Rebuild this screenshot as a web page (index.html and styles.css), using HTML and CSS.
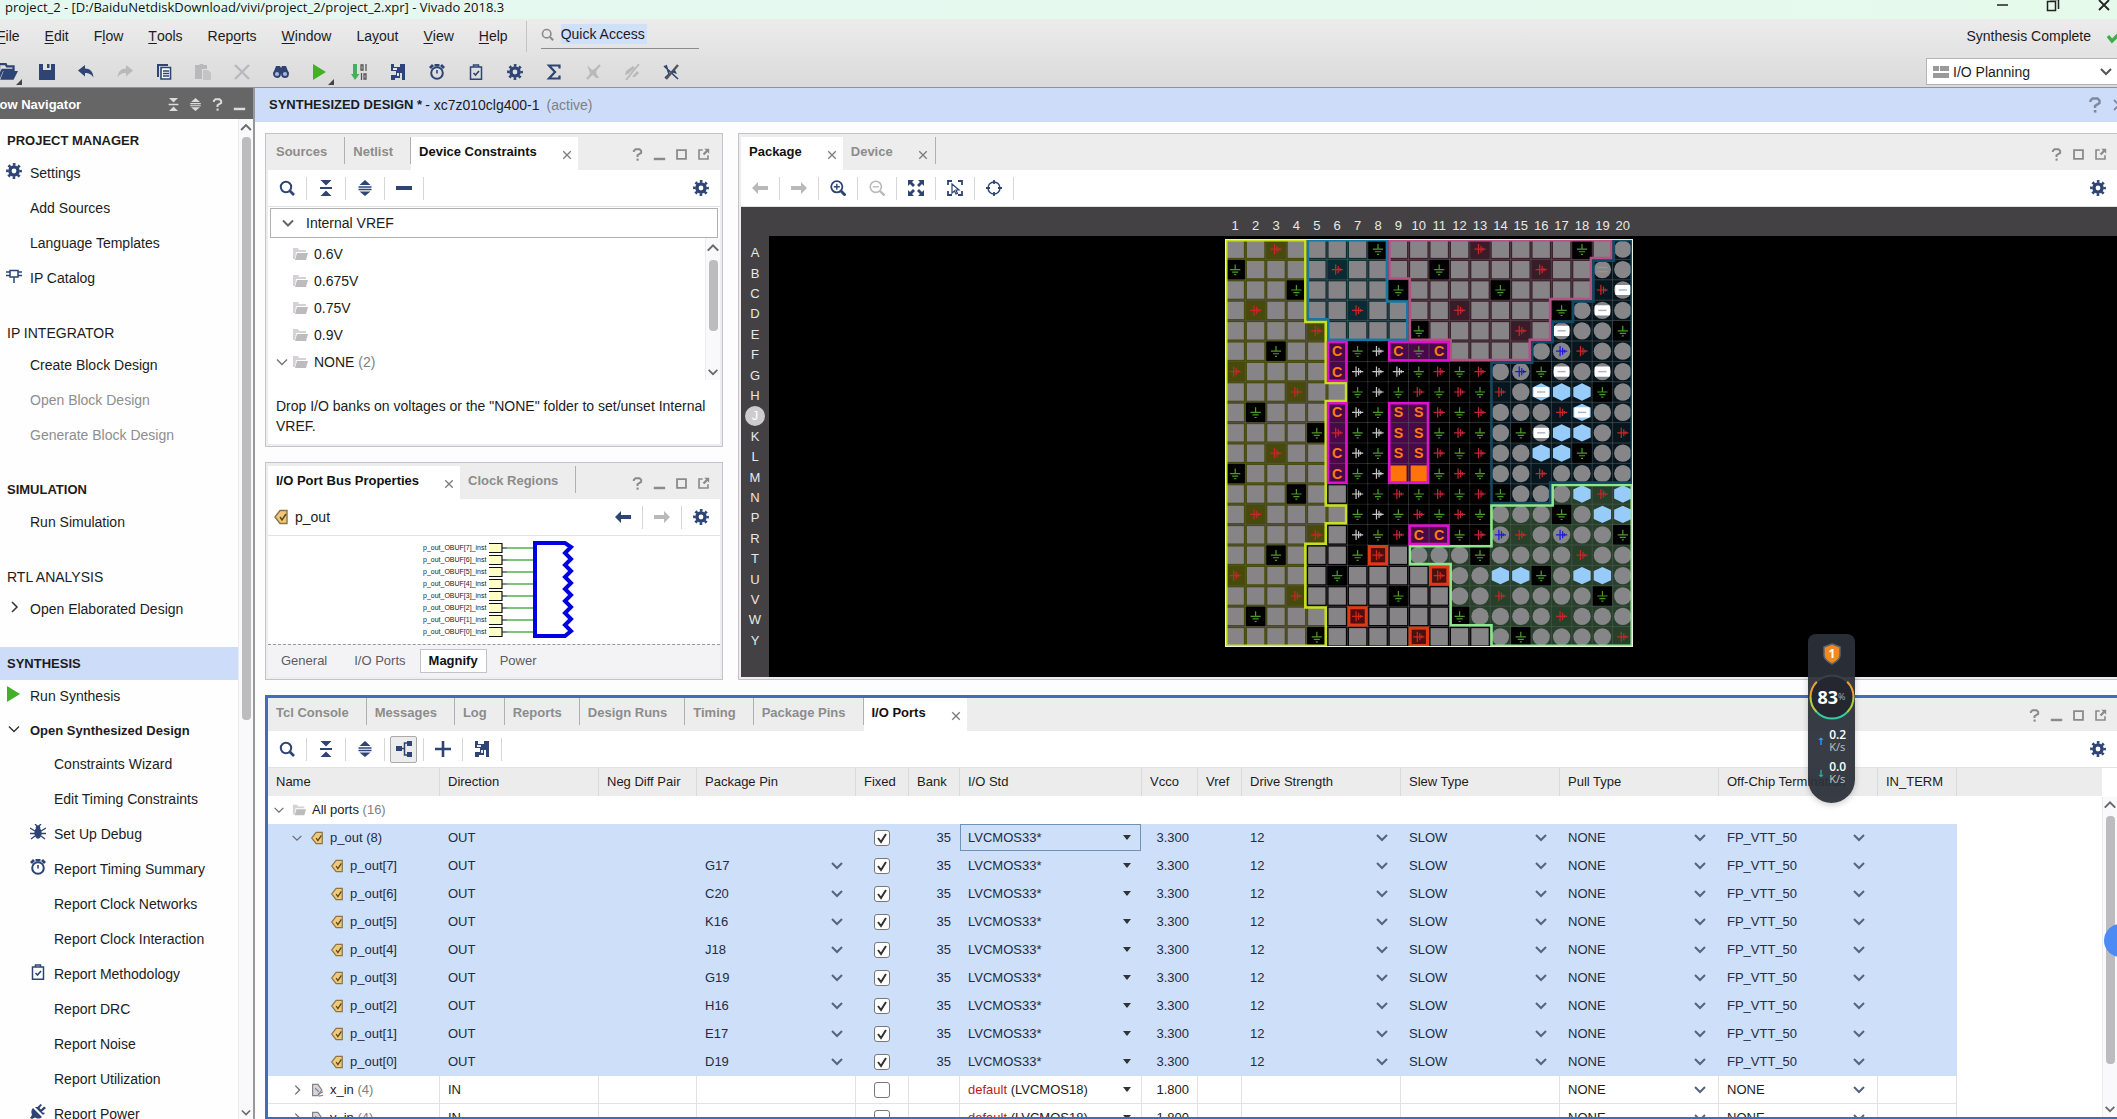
FILE: index.html
```html
<!DOCTYPE html>
<html lang="en">
<head>
<meta charset="utf-8">
<title>project_2 - Vivado 2018.3</title>
<link rel="stylesheet" href="styles.css">
</head>
<body>
<svg class="sprite" aria-hidden="true">
  <symbol id="i-gear" viewBox="0 0 16 16"><circle cx="8" cy="8" r="4.1" fill="none" stroke="currentColor" stroke-width="3.4"/><circle cx="8" cy="8" r="6.6" fill="none" stroke="currentColor" stroke-width="2.6" stroke-dasharray="2.59" stroke-dashoffset="1.3"/></symbol>
  <symbol id="i-search" viewBox="0 0 16 16"><circle cx="7" cy="7" r="5.2" fill="none" stroke="currentColor" stroke-width="2"/><path d="M11 11l4 4" stroke="currentColor" stroke-width="2.6"/></symbol>
  <symbol id="i-collapse" viewBox="0 0 16 16"><path d="M2.500 0h11L8 5.500zM2 7h12v2H2zM2.500 16h11L8 10.500z" fill="currentColor"/></symbol>
  <symbol id="i-expand" viewBox="0 0 16 16"><path d="M8 0l5.500 5h-11zM1.500 6.200h13v1.500h-13zM1.500 8.800h13v1.500h-13zM2.500 11.500h11L8 16z" fill="currentColor"/></symbol>
  <symbol id="i-minus" viewBox="0 0 16 16"><path d="M0 6h16v4H0z" fill="currentColor"/></symbol>
  <symbol id="i-plus" viewBox="0 0 16 16"><path d="M6.700 0h2.600v6.700H16v2.600H9.300V16H6.700V9.300H0V6.700h6.700z" fill="currentColor"/></symbol>
  <symbol id="i-tree" viewBox="0 0 16 16"><path d="M0 5h6v5H0zM11 0h5v5h-5zM11 11h5v5h-5z" fill="currentColor"/><path d="M5 7.500h3M12 2H8.500v12H12" fill="none" stroke="currentColor" stroke-width="1.500"/></symbol>
  <symbol id="i-floor" viewBox="0 0 16 16"><path d="M1 0h3v3h6V0h5v16h-3V9h-2v5H5v2H1v-5h5V7H1z" fill="currentColor"/><path d="M3 4h4v2H3zM7 9h2v3H7z" fill="#e8e8e8"/></symbol>
  <symbol id="i-help" viewBox="0 0 16 16"><path d="M3.500 5V3.500L5.500 1.500h5l2 2V6L8 9v2" fill="none" stroke="currentColor" stroke-width="2.400"/><path d="M6.800 13h2.600v2.600H6.800z" fill="currentColor"/></symbol>
  <symbol id="i-min" viewBox="0 0 16 16"><path d="M1 12h14v3H1z" fill="currentColor"/></symbol>
  <symbol id="i-max" viewBox="0 0 16 16"><path d="M2.500 2.500h11v11h-11z" fill="none" stroke="currentColor" stroke-width="2.200"/></symbol>
  <symbol id="i-float" viewBox="0 0 16 16"><path d="M7 2.500H2.500v11h11V9" fill="none" stroke="currentColor" stroke-width="2"/><path d="M9 1h6v6l-2-2-4 4-2-2 4-4z" fill="currentColor"/></symbol>
  <symbol id="i-x" viewBox="0 0 16 16"><path d="M3 3l10 10M13 3L3 13" stroke="currentColor" stroke-width="1.800"/></symbol>
  <symbol id="i-down" viewBox="0 0 16 16"><path d="M3 5.500l5 5 5-5" fill="none" stroke="currentColor" stroke-width="2"/></symbol>
  <symbol id="i-thin" viewBox="0 0 16 16"><path d="M3 5.500l5 5 5-5" fill="none" stroke="currentColor" stroke-width="1.400"/></symbol>
  <symbol id="i-up" viewBox="0 0 16 16"><path d="M2 11l6-6 6 6" fill="none" stroke="currentColor" stroke-width="2.400"/></symbol>
  <symbol id="i-right" viewBox="0 0 16 16"><path d="M6 3l5 5-5 5" fill="none" stroke="currentColor" stroke-width="1.500"/></symbol>
  <symbol id="i-back" viewBox="0 0 16 16"><path d="M0 8l6-6v4h10v4H6v4z" fill="currentColor"/></symbol>
  <symbol id="i-fwd" viewBox="0 0 16 16"><path d="M16 8l-6-6v4H0v4h10v4z" fill="currentColor"/></symbol>
  <symbol id="i-folder" viewBox="0 0 16 16"><path d="M1 2h5l1 2h7v2H4l-1 7H1z" fill="#d4d2d4"/><path d="M5 7h11l-2 7H3z" fill="#bdbbbd"/></symbol>
  <symbol id="i-play" viewBox="0 0 16 16"><path d="M1 0l13 8-13 8z" fill="#43b02a"/></symbol>
  <symbol id="i-open" viewBox="0 0 18 16"><path d="M1 1h6l1 2h6v3H4L1 13z" fill="none" stroke="currentColor" stroke-width="2"/><path d="M5 7h13l-4 8H2z" fill="currentColor"/></symbol>
  <symbol id="i-save" viewBox="0 0 16 16"><path d="M0 0h4v6h8V0h4v16H0z" fill="currentColor"/><path d="M8 0h2.500v4H8z" fill="currentColor"/></symbol>
  <symbol id="i-undo" viewBox="0 0 16 16"><path d="M0 6.500L7 1v3.500c5 0 8 3 8.500 9C13 10 11 9 7 9v3.500z" fill="currentColor"/></symbol>
  <symbol id="i-redo" viewBox="0 0 16 16"><path d="M16 6.500L9 1v3.500C4 4.500 1 7.500.500 13.500 3 10 5 9 9 9v3.500z" fill="currentColor"/></symbol>
  <symbol id="i-copy" viewBox="0 0 16 16"><path d="M1 0h11v2H3v11H1z" fill="currentColor"/><path d="M5 3.500h9.500v11.500H5z" fill="#fff" stroke="currentColor" stroke-width="1.600"/><path d="M7 7h6M7 9.500h6M7 12h6" stroke="currentColor" stroke-width="1.300"/></symbol>
  <symbol id="i-paste" viewBox="0 0 16 16"><path d="M0 1h4l1-1h3l1 1h3v4H7v10H0z" fill="currentColor"/><path d="M8 6h5l3 3v7H8z" fill="currentColor" opacity=".7"/></symbol>
  <symbol id="i-delete" viewBox="0 0 16 16"><path d="M1 1l14 14M15 1L1 15" stroke="currentColor" stroke-width="2.400"/></symbol>
  <symbol id="i-find" viewBox="0 0 16 16"><path d="M3 2h4l1 2 1-2h4l3 8H0z" fill="currentColor"/><circle cx="4" cy="10" r="3" fill="#aab6d6" stroke="currentColor" stroke-width="1.800"/><circle cx="12" cy="10" r="3" fill="#aab6d6" stroke="currentColor" stroke-width="1.800"/></symbol>
  <symbol id="i-bits" viewBox="0 0 16 16"><path d="M2 0h4v10h2.500L4 16 0 10h2z" fill="#43b05a"/><path d="M10 1v5h2V1zM15 0v7M10.500 9v7M13 10v5h2v-5z" fill="none" stroke="#555" stroke-width="1.300"/></symbol>
  <symbol id="i-clock" viewBox="0 0 16 16"><circle cx="8" cy="9" r="5.800" fill="none" stroke="currentColor" stroke-width="2"/><path d="M5.500 0h5v2.500h-5zM0 3l3-3 2 2-3 3zM16 3l-3-3-2 2 3 3zM7.200 6h1.600v3.600H7.200z" fill="currentColor"/></symbol>
  <symbol id="i-clip" viewBox="0 0 16 16"><path d="M2.500 3h11v12.300h-11zM5.500 3V1h5v2" fill="none" stroke="currentColor" stroke-width="1.500"/><path d="M5.500 9l2 2 3.500-4" fill="none" stroke="currentColor" stroke-width="1.600"/></symbol>
  <symbol id="i-sigma" viewBox="0 0 16 16"><path d="M13.500 4.500V1.500H3L9 8l-6 6.500h10.500v-3" fill="none" stroke="currentColor" stroke-width="2.200"/></symbol>
  <symbol id="i-nomark" viewBox="0 0 16 16"><path d="M2 1l5 5 5-2-1 5 3 5h-3l-3-3-5 3 2-5z" fill="currentColor"/><path d="M15 1L2 15" stroke="currentColor" stroke-width="2.200"/></symbol>
  <symbol id="i-hilite" viewBox="0 0 16 16"><path d="M15 0L2 16" stroke="currentColor" stroke-width="1.800"/><path d="M1 11l1-4 7-5 2 2-7 6zM8 13l5-6 2 2-4 4z" fill="currentColor"/></symbol>
  <symbol id="i-cut" viewBox="0 0 16 16"><path d="M1 2l14 13M3 1l3 9-4 4" fill="none" stroke="currentColor" stroke-width="1.600"/><path d="M15 1L3 15" stroke="#555" stroke-width="2.400"/><path d="M8 8l4-2 2 4z" fill="currentColor"/></symbol>
  <symbol id="i-chip" viewBox="0 0 16 16"><path d="M4 2.500h8V9H4zM0 4h4M0 7.500h4M12 4h4M12 7.500h4M8 9v6" fill="none" stroke="currentColor" stroke-width="1.500"/></symbol>
  <symbol id="i-bug" viewBox="0 0 16 16"><ellipse cx="8" cy="9" rx="3.600" ry="5.800" fill="currentColor"/><circle cx="8" cy="3.500" r="2.300" fill="currentColor"/><path d="M0 4l5 3M16 4l-5 3M0 9.500h5M11 9.500h5M1 15l4-3M15 15l-4-3M5 0l2 2M11 0L9 2" stroke="currentColor" stroke-width="1.300"/></symbol>
  <symbol id="i-plug" viewBox="0 0 16 16"><path d="M3 4l9 9c-2 2-5 2-7 .500L2 15l-2-1 2-3C1 8 1 6 3 4z" fill="currentColor"/><path d="M5 3l8 8 2-2-3.500-1L16 4l-2-1.500-3 3L9.500 4 12 1 10.500 0 7.500 3z" fill="currentColor"/></symbol>
  <symbol id="i-zoomin" viewBox="0 0 16 16"><circle cx="6.800" cy="6.800" r="5.600" fill="none" stroke="currentColor" stroke-width="1.800"/><path d="M3.800 6.800h6M6.800 3.800v6" stroke="currentColor" stroke-width="1.400"/><path d="M11 11l4.500 4.500" stroke="currentColor" stroke-width="3"/></symbol>
  <symbol id="i-zoomout" viewBox="0 0 16 16"><circle cx="6.800" cy="6.800" r="5.600" fill="none" stroke="currentColor" stroke-width="1.600"/><path d="M3.800 6.800h6" stroke="currentColor" stroke-width="1.400"/><path d="M11 11l4.500 4.500" stroke="currentColor" stroke-width="2.400"/></symbol>
  <symbol id="i-fit" viewBox="0 0 16 16"><path d="M0 0h6L4 2l3 3-2 2-3-3-2 2zM16 0v6l-2-2-3 3-2-2 3-3-2-2zM0 16v-6l2 2 3-3 2 2-3 3 2 2zM16 16h-6l2-2-3-3 2-2 3 3 2-2z" fill="currentColor"/></symbol>
  <symbol id="i-fitsel" viewBox="0 0 16 16"><path d="M1 5V1h4M11 1h4v4M15 11v4h-4M5 15H1v-4" fill="none" stroke="currentColor" stroke-width="1.800"/><path d="M5 4l7 6H9l1.500 3.500-1.500.500L7.500 11 5 13z" fill="none" stroke="currentColor" stroke-width="1.200"/></symbol>
  <symbol id="i-target" viewBox="0 0 16 16"><circle cx="8" cy="8" r="6" fill="none" stroke="currentColor" stroke-width="1.400"/><path d="M8 0v4M8 12v4M0 8h4M12 8h4" stroke="currentColor" stroke-width="1.800"/></symbol>
  <symbol id="i-port" viewBox="0 0 16 16"><path d="M7 1.500h7v13H7L2 8z" fill="#f0c878" stroke="#8a7448" stroke-width="1.400"/><path d="M7 8l2 3 4-6" fill="none" stroke="#5a4620" stroke-width="1.500"/></symbol>
  <symbol id="i-portin" viewBox="0 0 16 16"><path d="M3 1.500h6L13.500 8 9 14.500H3z" fill="#d8d6da" stroke="#848288" stroke-width="1.400"/><path d="M6 6l4 4M9 13l6-3M10 15l5-1" stroke="#848288" stroke-width="1.300"/></symbol>
  <symbol id="i-layout" viewBox="0 0 16 14"><path d="M0 1h6v5H0zM7 1h9v5H7zM0 8h16v5H0z" fill="#9a9a9a"/></symbol>
  <symbol id="i-done" viewBox="0 0 16 16"><path d="M1 8l4 5L15 3" fill="none" stroke="#3fae49" stroke-width="3.400"/></symbol>
  <symbol id="i-restore" viewBox="0 0 16 16"><path d="M2.500 4.500h8v9h-8zM5 2.500h8.500V12" fill="none" stroke="currentColor" stroke-width="1.500"/></symbol>
</svg>

<div class="app">
  <header class="titlebar">
    <h1 class="titlebar-text">project_2 - [D:/BaiduNetdiskDownload/vivi/project_2/project_2.xpr] - Vivado 2018.3</h1>
    <div class="window-controls">
      <button aria-label="Minimize"><svg class="icon"><path d="M3 8h11" stroke="currentColor" stroke-width="1.500"/></svg></button>
      <button aria-label="Restore"><svg class="icon"><use href="#i-restore"/></svg></button>
      <button aria-label="Close"><svg class="icon"><use href="#i-x"/></svg></button>
    </div>
  </header>
  <div class="chrome">
    <div class="menubar">
      <nav class="menus" aria-label="Main menu">
        <button><u>F</u>ile</button><button><u>E</u>dit</button><button>F<u>l</u>ow</button><button><u>T</u>ools</button><button>Rep<u>o</u>rts</button><button><u>W</u>indow</button><button>La<u>y</u>out</button><button><u>V</u>iew</button><button><u>H</u>elp</button>
      </nav>
      <div class="quick">
        <label class="quick-label">
          <svg class="icon muted"><use href="#i-search"/></svg>
          <input class="quick-input" type="text" value="Quick Access" aria-label="Quick Access">
        </label>
      </div>
      <div class="status">Synthesis Complete <svg class="icon"><use href="#i-done"/></svg></div>
    </div>
    <div class="toolbar">
      <div class="tools">
        <button class="has-more" aria-label="Open"><svg class="icon big"><use href="#i-open"/></svg></button>
        <button aria-label="Save"><svg class="icon"><use href="#i-save"/></svg></button>
        <button aria-label="Undo"><svg class="icon"><use href="#i-undo"/></svg></button>
        <button class="off" aria-label="Redo"><svg class="icon"><use href="#i-redo"/></svg></button>
        <button aria-label="Copy"><svg class="icon"><use href="#i-copy"/></svg></button>
        <button class="off" aria-label="Paste"><svg class="icon"><use href="#i-paste"/></svg></button>
        <button class="off" aria-label="Delete"><svg class="icon"><use href="#i-delete"/></svg></button>
        <button aria-label="Find"><svg class="icon"><use href="#i-find"/></svg></button>
        <button class="has-more" aria-label="Run"><svg class="icon"><use href="#i-play"/></svg></button>
        <button aria-label="Bitstream"><svg class="icon"><use href="#i-bits"/></svg></button>
        <button aria-label="Floorplan"><svg class="icon"><use href="#i-floor"/></svg></button>
        <button aria-label="Timing"><svg class="icon"><use href="#i-clock"/></svg></button>
        <button aria-label="Methodology"><svg class="icon"><use href="#i-clip"/></svg></button>
        <button aria-label="Settings"><svg class="icon"><use href="#i-gear"/></svg></button>
        <button aria-label="Summary"><svg class="icon"><use href="#i-sigma"/></svg></button>
        <button class="off" aria-label="Unmark"><svg class="icon"><use href="#i-nomark"/></svg></button>
        <button class="off" aria-label="Unhighlight"><svg class="icon"><use href="#i-hilite"/></svg></button>
        <button aria-label="Unselect"><svg class="icon"><use href="#i-cut"/></svg></button>
      </div>
      <label class="layout-pick"><svg class="icon"><use href="#i-layout"/></svg>
        <select aria-label="Layout"><option>I/O Planning</option></select>
      </label>
    </div>
  </div>

  <div class="body">
    <aside class="flow">
      <header class="flow-head">
        <h2>Flow Navigator</h2>
        <div class="flow-actions">
          <button aria-label="Collapse all"><svg class="icon small"><use href="#i-collapse"/></svg></button>
          <button aria-label="Expand all"><svg class="icon small"><use href="#i-expand"/></svg></button>
          <button aria-label="Help"><svg class="icon small"><use href="#i-help"/></svg></button>
          <button aria-label="Minimize"><svg class="icon small"><use href="#i-min"/></svg></button>
        </div>
      </header>
      <div class="flow-body">
        <nav class="flow-list" aria-label="Flow">
          <section><h3 class="strong">PROJECT MANAGER</h3>
            <ul>
              <li><svg class="icon"><use href="#i-gear"/></svg><a href="#">Settings</a></li>
              <li><a href="#">Add Sources</a></li>
              <li><a href="#">Language Templates</a></li>
              <li><svg class="icon"><use href="#i-chip"/></svg><a href="#">IP Catalog</a></li>
            </ul></section>
          <section><h3>IP INTEGRATOR</h3>
            <ul>
              <li><a href="#">Create Block Design</a></li>
              <li><a class="disabled" href="#">Open Block Design</a></li>
              <li><a class="disabled" href="#">Generate Block Design</a></li>
            </ul></section>
          <section><h3 class="strong">SIMULATION</h3>
            <ul><li><a href="#">Run Simulation</a></li></ul></section>
          <section><h3>RTL ANALYSIS</h3>
            <ul><li><svg class="icon dark"><use href="#i-right"/></svg><a href="#">Open Elaborated Design</a></li></ul></section>
          <section><h3 class="strong current">SYNTHESIS</h3>
            <ul>
              <li><svg class="icon"><use href="#i-play"/></svg><a href="#">Run Synthesis</a></li>
              <li><svg class="icon dark"><use href="#i-thin"/></svg><a class="strong" href="#">Open Synthesized Design</a></li>
            </ul>
            <ul class="nested">
              <li><a href="#">Constraints Wizard</a></li>
              <li><a href="#">Edit Timing Constraints</a></li>
              <li><svg class="icon"><use href="#i-bug"/></svg><a href="#">Set Up Debug</a></li>
              <li><svg class="icon"><use href="#i-clock"/></svg><a href="#">Report Timing Summary</a></li>
              <li><a href="#">Report Clock Networks</a></li>
              <li><a href="#">Report Clock Interaction</a></li>
              <li><svg class="icon"><use href="#i-clip"/></svg><a href="#">Report Methodology</a></li>
              <li><a href="#">Report DRC</a></li>
              <li><a href="#">Report Noise</a></li>
              <li><a href="#">Report Utilization</a></li>
              <li><svg class="icon"><use href="#i-plug"/></svg><a href="#">Report Power</a></li>
            </ul></section>
        </nav>
        <div class="scroll flow-scroll"><svg class="icon small"><use href="#i-up"/></svg><div class="track"><div class="thumb"></div></div><svg class="icon small"><use href="#i-down"/></svg></div>
      </div>
    </aside>

    <main class="work">
      <header class="design-head">
        <h2><b>SYNTHESIZED DESIGN *</b> <span>- xc7z010clg400-1</span> <em>(active)</em></h2>
        <div class="design-actions">
          <button aria-label="Help"><svg class="icon"><use href="#i-help"/></svg></button>
          <button aria-label="Close"><svg class="icon"><use href="#i-x"/></svg></button>
        </div>
      </header>

      <div class="panes">
        <div class="side-panes">
          <section class="panel">
            <div class="tabs">
              <button class="tab">Sources</button><button class="tab">Netlist</button><button class="tab active">Device Constraints<svg class="icon close"><use href="#i-x"/></svg></button>
              <div class="panel-actions"><button aria-label="Help"><svg class="icon small"><use href="#i-help"/></svg></button><button aria-label="Minimize"><svg class="icon small"><use href="#i-min"/></svg></button><button aria-label="Maximize"><svg class="icon small"><use href="#i-max"/></svg></button><button aria-label="Float"><svg class="icon small"><use href="#i-float"/></svg></button></div>
            </div>
            <div class="bar">
              <button aria-label="Search"><svg class="icon"><use href="#i-search"/></svg></button><button aria-label="Collapse"><svg class="icon"><use href="#i-collapse"/></svg></button><button aria-label="Expand"><svg class="icon"><use href="#i-expand"/></svg></button><button aria-label="Remove"><svg class="icon"><use href="#i-minus"/></svg></button>
              <button class="bar-end" aria-label="Settings"><svg class="icon"><use href="#i-gear"/></svg></button>
            </div>
            <div class="vref-wrap"><button class="vref"><svg class="icon"><use href="#i-down"/></svg>Internal VREF</button></div>
            <div class="volts">
              <ul>
                <li><svg class="icon"><use href="#i-folder"/></svg>0.6V</li>
                <li><svg class="icon"><use href="#i-folder"/></svg>0.675V</li>
                <li><svg class="icon"><use href="#i-folder"/></svg>0.75V</li>
                <li><svg class="icon"><use href="#i-folder"/></svg>0.9V</li>
                <li class="open"><svg class="icon"><use href="#i-thin"/></svg><svg class="icon"><use href="#i-folder"/></svg>NONE&nbsp;<em>(2)</em></li>
              </ul>
              <div class="scroll volts-scroll"><svg class="icon"><use href="#i-up"/></svg><div class="track"><div class="thumb"></div></div><svg class="icon"><use href="#i-down"/></svg></div>
            </div>
            <p class="hint">Drop I/O banks on voltages or the "NONE" folder to set/unset Internal VREF.</p>
          </section>

          <section class="panel">
            <div class="tabs">
              <button class="tab active">I/O Port Bus Properties<svg class="icon close"><use href="#i-x"/></svg></button><button class="tab">Clock Regions</button>
              <div class="panel-actions"><button aria-label="Help"><svg class="icon small"><use href="#i-help"/></svg></button><button aria-label="Minimize"><svg class="icon small"><use href="#i-min"/></svg></button><button aria-label="Maximize"><svg class="icon small"><use href="#i-max"/></svg></button><button aria-label="Float"><svg class="icon small"><use href="#i-float"/></svg></button></div>
            </div>
            <div class="bar">
              <span class="subject"><svg class="icon"><use href="#i-port"/></svg>p_out</span>
              <div class="bar-nav"><button aria-label="Back"><svg class="icon"><use href="#i-back"/></svg></button><button class="off" aria-label="Forward"><svg class="icon"><use href="#i-fwd"/></svg></button><button aria-label="Settings"><svg class="icon"><use href="#i-gear"/></svg></button></div>
            </div>
            <div class="schematic"><svg id="schematic" width="156" height="104" viewBox="0 0 156 104"></svg></div>
            <div class="subtabs"><button>General</button><button>I/O Ports</button><button class="active">Magnify</button><button>Power</button></div>
          </section>
        </div>

        <section class="panel package">
          <div class="tabs">
            <button class="tab active">Package<svg class="icon close"><use href="#i-x"/></svg></button><button class="tab closable">Device<svg class="icon close"><use href="#i-x"/></svg></button>
            <div class="panel-actions"><button aria-label="Help"><svg class="icon small"><use href="#i-help"/></svg></button><button aria-label="Maximize"><svg class="icon small"><use href="#i-max"/></svg></button><button aria-label="Float"><svg class="icon small"><use href="#i-float"/></svg></button></div>
          </div>
          <div class="bar">
            <button class="off" aria-label="Back"><svg class="icon"><use href="#i-back"/></svg></button><button class="off" aria-label="Forward"><svg class="icon"><use href="#i-fwd"/></svg></button><button aria-label="Zoom in"><svg class="icon"><use href="#i-zoomin"/></svg></button><button class="off" aria-label="Zoom out"><svg class="icon"><use href="#i-zoomout"/></svg></button><button aria-label="Fit"><svg class="icon"><use href="#i-fit"/></svg></button><button aria-label="Fit selection"><svg class="icon"><use href="#i-fitsel"/></svg></button><button aria-label="Auto fit"><svg class="icon"><use href="#i-target"/></svg></button>
            <button class="bar-end" aria-label="Settings"><svg class="icon"><use href="#i-gear"/></svg></button>
          </div>
          <div class="stage">
            <div class="cols" id="cols"></div>
            <div class="rows" id="rows"></div>
            <div class="canvas"><svg id="pins" viewBox="0 0 400 400" role="img" aria-label="Package pins"></svg></div>
          </div>
        </section>
      </div>

      <section class="ports">
        <div class="tabs">
          <button class="tab">Tcl Console</button><button class="tab">Messages</button><button class="tab">Log</button><button class="tab">Reports</button><button class="tab">Design Runs</button><button class="tab">Timing</button><button class="tab">Package Pins</button><button class="tab active">I/O Ports<svg class="icon close"><use href="#i-x"/></svg></button>
          <div class="panel-actions"><button aria-label="Help"><svg class="icon small"><use href="#i-help"/></svg></button><button aria-label="Minimize"><svg class="icon small"><use href="#i-min"/></svg></button><button aria-label="Maximize"><svg class="icon small"><use href="#i-max"/></svg></button><button aria-label="Float"><svg class="icon small"><use href="#i-float"/></svg></button></div>
        </div>
        <div class="bar">
          <button aria-label="Search"><svg class="icon"><use href="#i-search"/></svg></button><button aria-label="Collapse"><svg class="icon"><use href="#i-collapse"/></svg></button><button aria-label="Expand"><svg class="icon"><use href="#i-expand"/></svg></button><button class="pressed" aria-label="Group"><svg class="icon"><use href="#i-tree"/></svg></button><button aria-label="Add"><svg class="icon"><use href="#i-plus"/></svg></button><button aria-label="Place"><svg class="icon"><use href="#i-floor"/></svg></button>
          <button class="bar-end" aria-label="Settings"><svg class="icon"><use href="#i-gear"/></svg></button>
        </div>
        <div class="ports-body">
          <table class="ports-table">
            <colgroup><col class="w-name"><col class="w-m"><col class="w-neg"><col class="w-m"><col class="w-fix"><col class="w-bank"><col class="w-std"><col class="w-vcco"><col class="w-vref"><col class="w-m"><col class="w-m"><col class="w-m"><col class="w-m"><col class="w-term"><col></colgroup>
            <thead><tr><th>Name</th><th>Direction</th><th>Neg Diff Pair</th><th>Package Pin</th><th>Fixed</th><th>Bank</th><th>I/O Std</th><th>Vcco</th><th>Vref</th><th>Drive Strength</th><th>Slew Type</th><th>Pull Type</th><th>Off-Chip Termination</th><th>IN_TERM</th><th></th></tr></thead>
            <tbody id="ports"></tbody>
          </table>
          <div class="scroll ports-scroll"><svg class="icon"><use href="#i-up"/></svg><div class="track"><div class="thumb"></div></div><svg class="icon"><use href="#i-down"/></svg></div>
        </div>
      </section>
    </main>
  </div>

  <div class="edge-dot"></div>
  <div class="netmon">
    <svg class="shield" width="20" height="22" viewBox="0 0 20 22"><path d="M10 1l8 3v8c0 4-4 7-8 9-4-2-8-5-8-9V4z" fill="#f08c1e" stroke="#5f6470" stroke-width="1.500"/><text x="10" y="15" text-anchor="middle">1</text></svg>
    <div class="gauge"><svg width="46" height="46" viewBox="0 0 46 46"><circle cx="23" cy="23" r="21.500" fill="#24272f" stroke="#3a3f48" stroke-width="2"/><path d="M7.800 7.800A21.500 21.500 0 0 0 1.500 23" stroke="#f0a030"/><path d="M1.500 23A21.500 21.500 0 0 0 7.800 38.200" stroke="#b8d040"/><path d="M7.800 38.200A21.500 21.500 0 0 0 38.200 38.200" stroke="#38c8a0"/><path d="M38.200 38.200A21.500 21.500 0 0 0 44.500 23" stroke="#a8d040"/><path d="M44.500 23A21.500 21.500 0 0 0 38.200 7.800" stroke="#f0a030"/></svg><span><b>83</b>%</span></div>
    <div class="rate"><i class="up">↑</i><span><b>0.2</b>K/s</span></div>
    <div class="rate"><i class="dn">↓</i><span><b>0.0</b>K/s</span></div>
  </div>
</div>
<script src="app.js"></script>
</body>
</html>
```
FILE: styles.css
```css
* { box-sizing: border-box; }
body { margin: 0; font: 14px/20px "Liberation Sans", Arial, sans-serif; color: #1c1c1c; background: #fdfdfd; }
h1, h2, h3, p, ul { margin: 0; padding: 0; font-size: inherit; font-weight: normal; }
ul { list-style: none; }
button, input, select { font: inherit; color: inherit; background: none; border: 0; padding: 0; margin: 0; border-radius: 0; }
button { display: flex; align-items: center; justify-content: center; white-space: nowrap; }
select { appearance: none; }
em { font-style: normal; color: #808080; }
.sprite { display: none; }
.icon { width: 16px; height: 16px; flex: none; display: block; color: #2d4475; }
.icon.small { width: 13px; height: 13px; color: inherit; }
.icon.big { width: 20px; height: 18px; }
.icon.muted { color: #8c8c8c; }
.icon.dark { color: #333; }
.off .icon { color: #b9b9bb; }
.strong { font-weight: bold; }

.app { position: relative; display: flex; flex-direction: column; height: 100vh; overflow: hidden; }

.titlebar { display: flex; justify-content: space-between; align-items: flex-start; height: 19px; background: linear-gradient(90deg, #e4f8f2, #e6faec); }
.titlebar-text { padding-left: 5px; font-family: "Open Sans", sans-serif; font-size: 13px; line-height: 14px; white-space: nowrap; color: #111; }
.window-controls { display: flex; gap: 35px; margin: -3px 5px 0 0; }
.window-controls .icon { color: #222; }

.chrome { background: linear-gradient(#ececec, #dadada); border-bottom: 1px solid #8f9399; }
.menubar { display: flex; align-items: center; height: 34px; }
.menus { display: flex; gap: 25px; margin-left: -3px; }
.menus u { text-underline-offset: 2px; }
.quick { margin-left: 18px; border-left: 1px solid #c4c4c4; padding: 0 0 3px 14px; }
.quick-label { display: flex; align-items: center; gap: 7px; width: 158px; height: 28px; border-bottom: 1px solid #8c8c8c; }
.quick-label .icon { width: 13px; height: 13px; }
.quick-input { width: 86px; height: 20px; background: #cfe0fb; }
.status { display: flex; align-items: center; gap: 16px; margin: 0 -6px 0 auto; }
.toolbar { display: flex; align-items: center; height: 34px; padding-top: 3px; }
.tools { display: flex; margin-left: -12px; }
.tools button { width: 39px; height: 30px; position: relative; }
.has-more::after { content: ""; position: absolute; right: 5px; bottom: 2px; border: 3px solid transparent; border-right-color: #444; border-bottom-color: #444; }
.layout-pick { display: flex; align-items: center; gap: 4px; width: 194px; height: 27px; margin: 0 -3px 0 auto; padding-left: 6px; background: #fff; border: 1px solid #b4b4b4; }
.layout-pick select { flex: 1; height: 24px; background: url("data:image/svg+xml,%3Csvg xmlns='http://www.w3.org/2000/svg' width='12' height='8'%3E%3Cpath d='M1 1l5 5 5-5' fill='none' stroke='%23555' stroke-width='2'/%3E%3C/svg%3E") no-repeat right 7px center; }

.body { flex: 1; min-height: 0; display: grid; grid-template-columns: 255px minmax(0, 1fr); }

.flow { display: flex; flex-direction: column; min-height: 0; background: #fefefe; border-right: 2px solid #98989a; }
.flow-head { display: flex; justify-content: space-between; align-items: center; height: 31px; flex: none; padding-top: 2px; background: #666; color: #fff; }
.flow-head h2 { font-weight: bold; font-size: 13px; margin-left: -12px; }
.flow-actions { display: flex; gap: 9px; margin-right: 7px; color: #dcdcdc; }
.flow-body { flex: 1; min-height: 0; display: flex; }
.flow-list { flex: 1; min-width: 0; padding-top: 8px; overflow: hidden; }
.flow-list section { margin-bottom: 24px; }
.flow-list h3 { padding-left: 7px; line-height: 28px; }
.flow-list h3.strong, .flow-list a.strong { font-size: 13px; }
.flow-list h3.current { margin: -3px 0 -2px; line-height: 33px; background: #cdddf9; }
.flow-list li { display: flex; align-items: center; height: 35px; padding-left: 30px; white-space: nowrap; }
.flow-list li .icon { margin: -3px 8px 0 -24px; }
.flow-list .nested { margin-top: -2px; }
.flow-list .nested li { padding-left: 54px; }
.flow-list a { color: inherit; text-decoration: none; }
.flow-list a.disabled { color: #8e8e8e; }

.scroll { display: flex; flex-direction: column; align-items: center; width: 15px; flex: none; background: #f9f8fa; border-left: 1px solid #ececee; }
.scroll .icon { width: 14px; color: #6a6a6a; }
.track { flex: 1; width: 9px; }
.thumb { width: 9px; border-radius: 4px; background: #bcbbbd; }
.flow-scroll { padding-top: 2px; }
.flow-scroll .thumb { height: 60%; margin-top: 3px; }

.work { display: grid; grid-template-rows: 34px minmax(0, 573fr) minmax(0, 424fr); min-height: 0; }
.design-head { display: flex; justify-content: space-between; align-items: center; padding-left: 14px; background: #cdddf9; }
.design-head h2 { display: flex; gap: 3px; }
.design-head em { margin-left: 4px; }
.design-head b { font-size: 13px; }
.design-actions { display: flex; gap: 8px; margin-right: -10px; }
.design-actions .icon { color: #8088a0; }
.panes { display: grid; grid-template-columns: 458px minmax(0, 1fr); gap: 15px; margin: 11px -3px 15px 10px; min-height: 0; }
.side-panes { display: grid; grid-template-rows: minmax(0, 314fr) minmax(0, 218fr); gap: 15px; min-height: 0; }
.panel { display: flex; flex-direction: column; min-width: 0; min-height: 0; padding: 3px 2px 2px; border: 1px solid #c6c2c9; background: #ededf0; }

.tabs { display: flex; height: 33px; flex: none; background: #ededed; }
.tab { position: relative; padding: 0 18px 3px 8px; color: #8c8c8c; font-weight: bold; font-size: 13px; }
.tab:not(.active)::after { content: ""; position: absolute; right: 0; top: 0; height: 27px; border-right: 1px solid #b0b0b2; }
.tab.active { padding-right: 5px; background: #fff; color: #111; }
.close { margin: 5px 0 0 24px; }
.close.icon { width: 12px; height: 12px; color: #7c7c7c; }
.tab.closable { padding-right: 7px; }
.panel-actions { display: flex; gap: 9px; margin: 1px 10px 0 auto; color: #8a8a8c; }

.bar { display: flex; align-items: center; height: 37px; flex: none; background: #fff; border-bottom: 1px solid #e2e2e2; }
.bar > button { width: 39px; height: 23px; border-right: 1px solid #d6d6d8; }
.bar > .bar-end { margin-left: auto; width: 38px; border: 0; }
.bar > .pressed { position: relative; }
.pressed::before { content: ""; position: absolute; inset: -2px 6px -2px 5px; border: 1px solid #aaa; background: #ececec; border-radius: 2px; }
.pressed .icon { position: relative; }
.subject { display: flex; align-items: center; gap: 6px; padding-left: 5px; }
.bar-nav { display: flex; margin-left: auto; }
.bar-nav button { width: 39px; height: 23px; border-left: 1px solid #d6d6d8; }
.bar-nav button:first-child { border: 0; }

.vref-wrap { flex: none; padding: 1px 2px 0; background: #fff; }
.vref { width: 100%; justify-content: flex-start; gap: 10px; height: 30px; padding-left: 9px; border: 1px solid #b0b0b0; }
.vref .icon { color: #666; }
.volts { flex: none; display: flex; background: #fff; }
.volts ul { flex: 1; padding: 2px 0 5px; }
.volts li { display: flex; align-items: center; height: 27px; padding-left: 24px; }
.volts li .icon { margin-right: 6px; }
.volts li.open { padding-left: 6px; }
.volts li.open .icon:first-child { margin-right: 2px; color: #777; }
.volts-scroll { padding-top: 2px; }
.volts-scroll .thumb { height: 66%; margin-top: 4px; }
.hint { flex: 1; padding: 16px 8px 0; background: #fff; }

.schematic { flex: 1; min-height: 0; display: flex; justify-content: center; align-items: center; padding-left: 14px; background: #fff; }
.schematic text { font-size: 7px; fill: #222; }
.subtabs { display: flex; align-items: center; height: 33px; flex: none; background: #f3f3f6; border-top: 1px dashed #999; color: #5c5c60; font-size: 13px; }
.subtabs button { height: 24px; padding: 0 14px 0 13px; }
.subtabs .active { padding: 0 8px; background: #fff; border: 1px solid #c4c4c8; color: #111; font-weight: bold; }

.stage { flex: 1; min-height: 0; display: grid; grid-template: 29px minmax(0, 1fr) / 28px minmax(0, 1fr); background: #434143; color: #e8e8e8; overflow: hidden; }
.cols { grid-column: 1 / 3; display: grid; grid-template-columns: repeat(20, 1fr); width: 408px; justify-self: center; align-items: center; text-align: center; font-size: 13px; padding-top: 8px; }
.rows { display: grid; grid-template-rows: repeat(20, 1fr); height: 408px; margin-top: 7px; text-align: center; align-items: center; font-size: 13px; }
.rows span { justify-self: center; width: 20px; height: 20px; }
.rows .here { border-radius: 50%; background: #ccc; color: #fff; }
.canvas { display: flex; justify-content: center; align-items: flex-start; padding: 3px 28px 0 0; background: #000; }
#pins { width: 408px; height: 408px; }
#pins text { font: bold 14px "Liberation Sans", Arial, sans-serif; fill: #ff7a10; text-anchor: middle; }

.ports { display: flex; flex-direction: column; min-height: 0; margin-left: 10px; border: 3px solid #3f6fb8; border-width: 3px 0 2px 3px; background: #fff; overflow: hidden; }
.ports-body { flex: 1; min-height: 0; display: flex; }
.ports-table { flex: 1; align-self: flex-start; min-width: 0; table-layout: fixed; border-collapse: separate; border-spacing: 0; }
.ports-table th { height: 28px; padding: 0 8px; background: #ececec; border-right: 1px solid #dadada; text-align: left; font-weight: normal; font-size: 13px; white-space: nowrap; }
.ports-table th:last-child { border: 0; }
.ports-table td { height: 28px; padding: 0 8px; font-size: 13px; white-space: nowrap; border-right: 1px solid #e2e2e4; border-bottom: 1px solid #e2e2e4; overflow: hidden; }
.ports-table td:last-child, .ports-table .group td { border-color: transparent; }
.ports-table .sel td:not(:last-child) { background: #cddff9; border-color: #cddff9; color: #222c44; }
.w-name { width: 172px; } .w-m { width: 159px; } .w-neg { width: 98px; } .w-fix { width: 53px; } .w-bank { width: 51px; } .w-std { width: 182px; } .w-vcco { width: 56px; } .w-vref { width: 44px; } .w-term { width: 79px; }
.ports-table .num { text-align: right; }
.ports-table .check { text-align: center; }
.ports-table td:first-child { padding: 0 0 0 4px; }
.node { display: flex; align-items: center; gap: 6px; }
.node .icon { width: 14px; height: 14px; }
.node .twisty { color: #6c6c74; }
.node.l1 { padding-left: 18px; }
.node.l2 { padding-left: 58px; }
.ports-table select { display: block; width: 100%; height: 26px; background: url("data:image/svg+xml,%3Csvg xmlns='http://www.w3.org/2000/svg' width='12' height='8'%3E%3Cpath d='M1 1l5 5 5-5' fill='none' stroke='%2356647e' stroke-width='2'/%3E%3C/svg%3E") no-repeat right 4px center; }
.ports-table .std select { background: url("data:image/svg+xml,%3Csvg xmlns='http://www.w3.org/2000/svg' width='8' height='5'%3E%3Cpath d='M0 0h8L4 5z' fill='%23333'/%3E%3C/svg%3E") no-repeat right 2px center; }
.ports-table .default select { width: 14px; }
.default div { display: flex; justify-content: space-between; align-items: center; }
.default i { font-style: normal; color: #c01818; }
.ports-table .sel .focus { box-shadow: inset 0 0 0 1px #6f93b8; }
input[type="checkbox"] { appearance: none; display: inline-block; vertical-align: middle; width: 16px; height: 16px; border: 1px solid #777; border-radius: 3px; background: #fff; }
input[type="checkbox"]:checked { background: #fff url("data:image/svg+xml,%3Csvg xmlns='http://www.w3.org/2000/svg' width='12' height='12'%3E%3Cpath d='M2 6l3 4 5-8' fill='none' stroke='%23333' stroke-width='2'/%3E%3C/svg%3E") no-repeat center; }
.ports-scroll { margin-top: 29px; }
.ports-scroll .thumb { height: 86%; margin-top: 3px; }

.edge-dot { position: absolute; right: -20px; top: 924px; width: 33px; height: 33px; border-radius: 50%; background: #4c8bf5; }
.netmon { position: absolute; right: 262px; top: 634px; width: 47px; height: 169px; padding-top: 9px; border-radius: 8px 8px 24px 24px; background: #2c3038f0; color: #fff; display: flex; flex-direction: column; align-items: center; font-family: "Open Sans", sans-serif; box-shadow: 0 2px 6px #0003; }
.shield text { font: bold 12px "Open Sans", sans-serif; fill: #fff; }
.gauge { position: relative; width: 46px; height: 46px; margin: 9px 0 5px; flex: none; }
.gauge path { fill: none; stroke-width: 2; }
.gauge span { position: absolute; inset: 0; display: flex; align-items: center; justify-content: center; font-size: 9px; color: #aaa; }
.gauge b { font-size: 18px; color: #fff; }
.rate { display: flex; align-items: center; gap: 4px; height: 32px; font-size: 11px; line-height: 12px; color: #c4c4c4; }
.rate b { display: block; font-size: 12px; font-weight: 600; color: #fff; }
.rate i { font: bold 10px "DejaVu Sans", sans-serif; }
.up { color: #2ea3f2; }
.dn { color: #22b894; }
```
FILE: app.js
```js
const LETTERS = "ABCDEFGHJKLMNPRTUVWY";

/* One character per pin: . square, o circle, g ground, r bank supply,
   R core supply, w aux supply, b ref supply, - config, h/H hexagon, C/S/F dedicated, x marked */
const PINS = [
  "..r....g....r....g.o", "g....r....g....r..co", "...g....g....g....r-", ".r....r....r....go-o",
  "....r....g....r.-oog", "..g..CgwCmC....obroo", "r....CwwwgRgRobg-o-o", "...r..gwgRgRgroHhhgo",
  ".g...CwgSSRgRooorHoo", "....gMgwSSgRgog-hhor", "..r..CwgSSRgRoohhgoo", "g....CgwFFgRgooroooo",
  "...g..wgRgRgRgooohrh", ".r....gwgRgRgooogohh", "....r.wgRCCgRbroboog", "..g...gx.ooogooooroo",
  "r....g....xoohhgohho", "...r....g..ooroooogo", ".g....x....goooorooo", "....g....x...ogoooor"
];

const BANKS = [
  { line: "#c8e020", fill: "#484a0c", pts: "0,0 4,0 4,4 5,4 5,7 6,7 6,8 5,8 5,13 6,13 6,14 5,14 5,15 4,15 4,18 5,18 5,20 0,20" },
  { line: "#1478a0", fill: "#0c2a34", pts: "4,0 8,0 8,3 9,3 9,5 5,5 5,4 4,4" },
  { line: "#b45082", fill: "#3a1c28", pts: "8,0 19,0 19,1 18,1 18,3 16,3 16,5 15,5 15,6 11,6 11,5 9,5 9,2 8,2" },
  { line: "#0e4a64", fill: "#06161e", pts: "19,0 20,0 20,12 16,12 16,13 13,13 13,6 15,6 15,5 16,5 16,4 17,4 17,3 18,3 18,1 19,1" },
  { line: "#8ee68e", fill: "#26402a", pts: "16,12 20,12 20,20 13,20 13,19 11,19 11,16 9,16 9,15 13,15 13,13 16,13" }
];
const DEDICATED = [[5, 5, 1, 2], [8, 5, 3, 1], [5, 8, 1, 4], [8, 8, 2, 4], [9, 14, 2, 1]];

const scale = pts => pts.split(" ").map(p => p.split(",").map(v => v * 20).join(",")).join(" ");
const ground = `<path d="M10 5v5M5 10h10M7 12.500h6M9 15h2" stroke="#4f9a2c" stroke-width="1.200"/>`;
const supply = c => `<path d="M4.500 10h11M8.500 5v10" stroke="${c}" stroke-width="1.200"/><path d="M11 6.500v7" stroke="${c}" stroke-width="1.200"/><path d="M12.800 8.500v3" stroke="${c}" stroke-width="1.200"/>`;
const square = `<rect x="1.500" y="1.500" width="17" height="17" fill="#868486"/>`;
const circle = `<circle cx="10" cy="10" r="8.500" fill="#868688"/>`;
const black = `<rect x=".500" y=".500" width="19" height="19" fill="#000"/>`;
const hexagon = `<path d="M10 1.500l8.500 4v9l-8.500 4-8.500-4v-9z" fill="#96cbfa"/>`;
const config = `<rect x="2.500" y="5" width="15" height="10" rx="1" fill="#fff"/><path d="M6 10h8" stroke="#aab4c0" stroke-width="1.400"/>`;
const glyph = t => `<text x="10" y="15">${t}</text>`;
const SHAPES = {
  ".": square, o: circle, c: circle + `<path d="M5 8h10M5 12h10" stroke="#d08a50"/>`,
  g: black + ground, m: ground, r: supply("#c8262a"), M: supply("#c8262a"),
  R: black + supply("#c42838"), w: black + supply("#c8c8c8"), b: circle + supply("#1818e0"),
  "-": circle + config, h: hexagon, H: hexagon + config,
  C: glyph("C"), S: glyph("S"), F: `<rect x="2" y="2" width="16" height="16" fill="#ff7408"/>`,
  x: `<rect x="1.500" y="1.500" width="17" height="17" fill="#4a1010" stroke="#e03a14" stroke-width="3"/>` + supply("#d02818")
};

let map = `<rect width="400" height="400" fill="#000"/>`;
map += BANKS.map(b => `<polygon points="${scale(b.pts)}" fill="${b.fill}"/>`).join("");
map += DEDICATED.map(([x, y, w, h]) => `<rect x="${x * 20}" y="${y * 20}" width="${w * 20}" height="${h * 20}" fill="#4a0848"/>`).join("");
for (let i = 1; i < 20; i++) map += `<path d="M0 ${i * 20}h400M${i * 20} 0v400" stroke="#565656" stroke-width=".600"/>`;
PINS.forEach((row, y) => [...row].forEach((c, x) => {
  map += `<g transform="translate(${x * 20} ${y * 20})">${SHAPES[c]}</g>`;
}));
BANKS.forEach((b, i) => {
  map += `<clipPath id="bank${i}"><polygon points="${scale(b.pts)}"/></clipPath><polygon points="${scale(b.pts)}" fill="none" stroke="${b.line}" stroke-width="5" clip-path="url(#bank${i})"/>`;
});
map += DEDICATED.map(([x, y, w, h]) => `<rect x="${x * 20 + 1}" y="${y * 20 + 1}" width="${w * 20 - 2}" height="${h * 20 - 2}" fill="none" stroke="#e010d0" stroke-width="2.500"/>`).join("");
map += `<rect x=".500" y=".500" width="399" height="399" fill="none" stroke="#e8f4d8"/>`;
document.getElementById("pins").innerHTML = map;
document.getElementById("cols").innerHTML = [...LETTERS].map((_, i) => `<span>${i + 1}</span>`).join("");
document.getElementById("rows").innerHTML = [...LETTERS].map(l => `<span${l === "J" ? ' class="here"' : ""}>${l}</span>`).join("");

/* Bus schematic */
let sch = "";
for (let i = 0; i < 8; i++) {
  const y = 10 + i * 12;
  sch += `<text x="0" y="${y + 2}">p_out_OBUF[${7 - i}]_inst</text><path d="M66 ${y - 4.500}h13v9h-13" fill="#ffffc8" stroke="#111" stroke-width="1.200"/><path d="M79 ${y}h5" stroke="#111"/><path d="M84 ${y}h26" stroke="#35a035" stroke-width="1.300"/>`;
}
let zig = "M112 5h30";
for (let i = 0; i < 8; i++) zig += `L148 ${9 + i * 12}L142 ${i < 7 ? 15 + i * 12 : 98}`;
sch += `<path d="${zig}H112z" fill="#fff" stroke="#0000e0" stroke-width="4"/>`;
document.getElementById("schematic").innerHTML = sch;

/* Port table */
const use = (id, cls = "") => `<svg class="icon ${cls}"><use href="#i-${id}"/></svg>`;
const pick = (v, name) => `<select aria-label="${name}"><option>${v}</option></select>`;
const outRow = (label, pin, top) => `<tr class="sel">
  <td><div class="node ${top ? "l1" : "l2"}">${top ? use("thin", "twisty") : ""}${use("port")}${label}</div></td>
  <td>OUT</td><td></td><td>${pin ? pick(pin, "Package Pin") : ""}</td>
  <td class="check"><input type="checkbox" checked aria-label="Fixed"></td><td class="num">35</td>
  <td class="std${top ? " focus" : ""}">${pick("LVCMOS33*", "I/O Std")}</td><td class="num">3.300</td><td></td>
  <td>${pick("12", "Drive Strength")}</td><td>${pick("SLOW", "Slew Type")}</td><td>${pick("NONE", "Pull Type")}</td>
  <td>${pick("FP_VTT_50", "Off-Chip Termination")}</td><td></td><td></td></tr>`;
const inRow = label => `<tr>
  <td><div class="node l1">${use("right", "twisty")}${use("portin")}<span>${label} <em>(4)</em></span></div></td>
  <td>IN</td><td></td><td></td><td class="check"><input type="checkbox" aria-label="Fixed"></td><td></td>
  <td class="std default"><div><span><i>default</i> (LVCMOS18)</span><select aria-label="I/O Std"></select></div></td><td class="num">1.800</td><td></td>
  <td></td><td></td><td>${pick("NONE", "Pull Type")}</td><td>${pick("NONE", "Off-Chip Termination")}</td><td></td><td></td></tr>`;
const pins = ["G17", "C20", "K16", "J18", "G19", "H16", "E17", "D19"];
document.getElementById("ports").innerHTML =
  `<tr class="group"><td colspan="15"><div class="node">${use("thin", "twisty")}${use("folder")}<span>All ports <em>(16)</em></span></div></td></tr>` +
  outRow("p_out (8)", "", true) +
  pins.map((p, i) => outRow(`p_out[${7 - i}]`, p, false)).join("") +
  inRow("x_in") + inRow("y_in");
```
